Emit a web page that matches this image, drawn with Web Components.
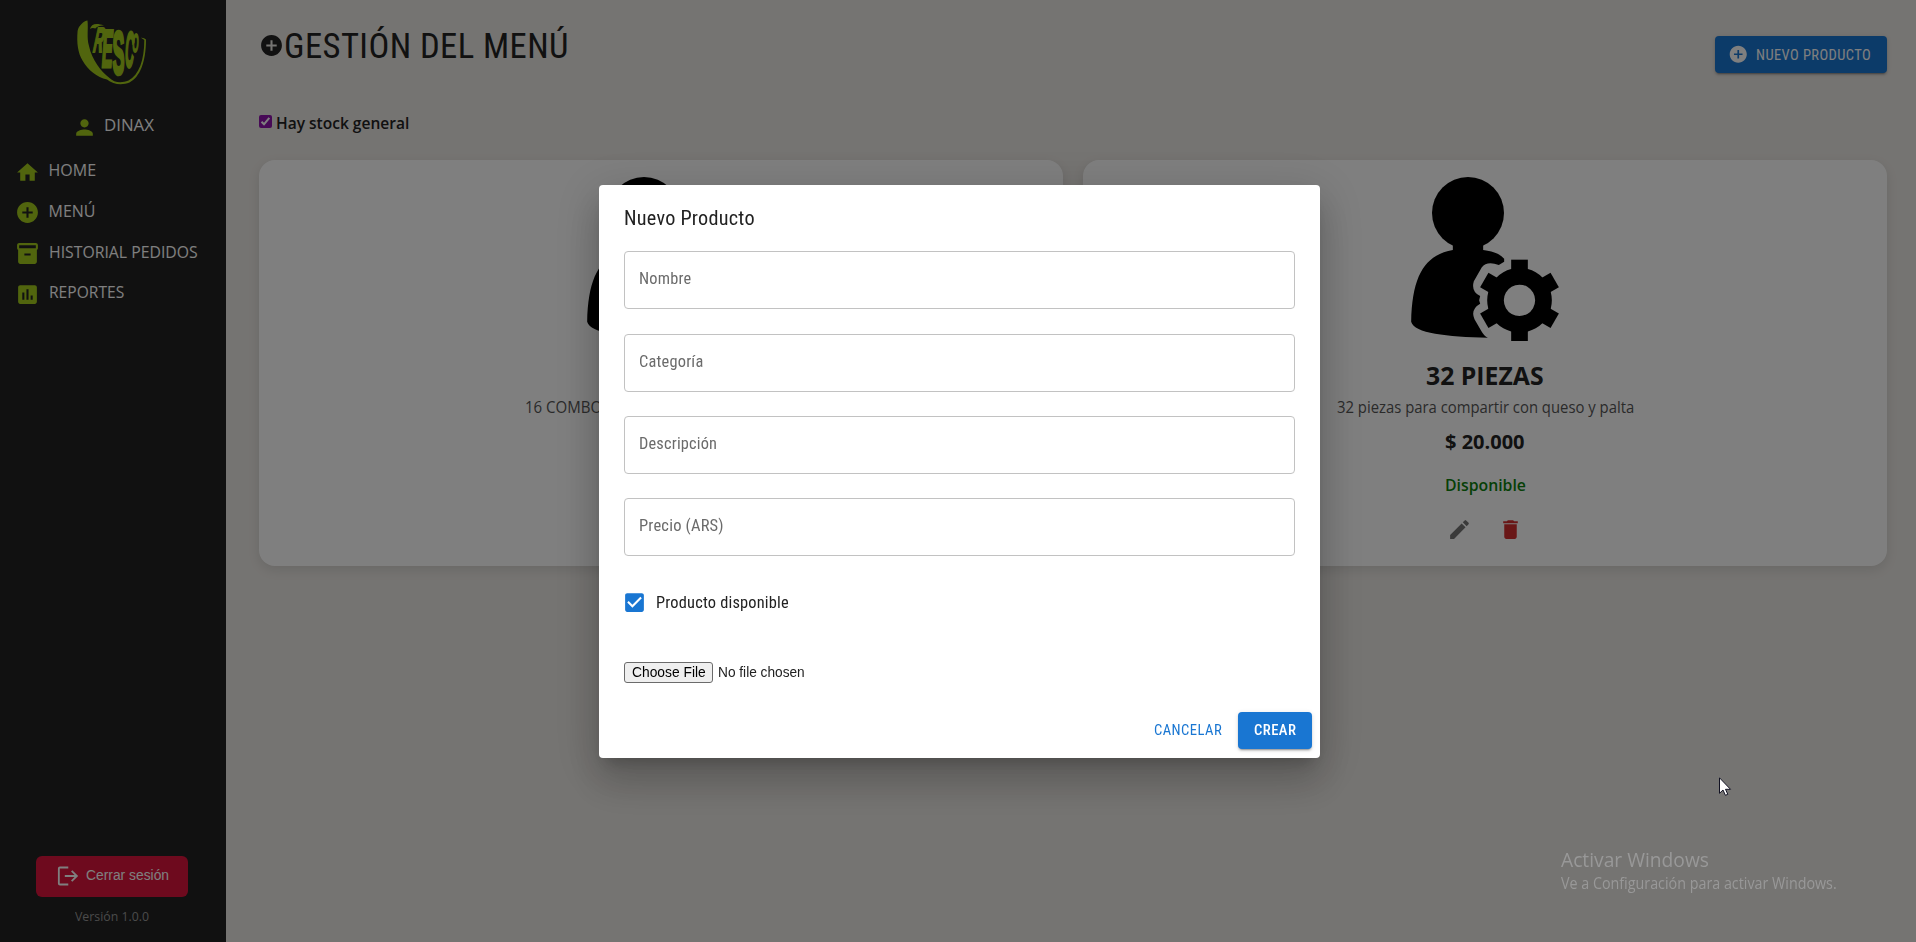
<!DOCTYPE html>
<html lang="es">
<head>
<meta charset="utf-8">
<title>Gestión del menú</title>
<style>
html,body{margin:0;height:100%;overflow:hidden}
body{font-family:"Open Sans","Noto Sans",sans-serif;background:#ebe8e4}
</style>
</head>
<body>
<menu-app></menu-app>
<script>
const ICONS = {
  person:'<path d="M12 12c2.21 0 4-1.79 4-4s-1.79-4-4-4-4 1.79-4 4 1.79 4 4 4m0 2c-2.67 0-8 1.34-8 4v2h16v-2c0-2.66-5.33-4-8-4"/>',
  home:'<path d="M10 20v-6h4v6h5v-8h3L12 3 2 12h3v8z"/>',
  add:'<path d="M12 2C6.48 2 2 6.48 2 12s4.48 10 10 10 10-4.480 10-10S17.520 2 12 2m5 11h-4v4h-2v-4H7v-2h4V7h2v4h4z"/>',
  archive:'<path fill-rule="evenodd" d="M20 2H4c-1 0-2 .9-2 2v3.010c0 .720.430 1.340 1 1.690V20c0 1.100 1.100 2 2 2h14c.9 0 2-.9 2-2V8.700c.570-.350 1-.970 1-1.690V4c0-1.100-1-2-2-2m-5 12H9v-2h6zm5-7H4V4h16z"/>',
  report:'<path d="M19 3H5c-1.100 0-2 .9-2 2v14c0 1.100.9 2 2 2h14c1.100 0 2-.9 2-2V5c0-1.100-.9-2-2-2M9 17H7v-7h2zm4 0h-2V7h2zm4 0h-2v-4h2z"/>',
  edit:'<path d="M3 17.250V21h3.750L17.810 9.940l-3.750-3.750zM20.710 7.040c.390-.390.390-1.020 0-1.410l-2.340-2.340a.9959.9959 0 0 0-1.410 0l-1.830 1.830 3.750 3.750z"/>',
  trash:'<path d="M6 19c0 1.100.9 2 2 2h8c1.100 0 2-.9 2-2V7H6zM19 4h-3.500l-1-1h-5l-1 1H5v2h14z"/>',
  check:'<path d="M19 3H5c-1.110 0-2 .9-2 2v14c0 1.100.890 2 2 2h14c1.110 0 2-.9 2-2V5c0-1.100-.890-2-2-2m-9 14-5-5 1.410-1.410L10 14.170l7.590-7.590L19 8z"/>',
  logout:'<path fill="none" stroke="currentColor" stroke-width="2" d="M12.300 2.700H3.200Q2 2.700 2 3.900v16.200q0 1.200 1.200 1.200h9.100M8.500 12H21.500M16 6.300 21.700 12 16 17.700"/>'
};

function define(name, css, html, after) {
  customElements.define(name, class extends HTMLElement {
    connectedCallback() {
      if (this.shadowRoot) return;
      const root = this.attachShadow({mode:'open'});
      root.innerHTML = '<style>' + css + '</style>' + (typeof html === 'function' ? html(this) : html);
      if (after) after(this, root);
    }
  });
}
const attr = (el, n, d='') => el.getAttribute(n) ?? d;

/* A single line of text condensed to the width given in "w". */
define('ui-text', `
  :host{display:inline-block;white-space:nowrap;flex:none}
  :host([face=cond]){font-family:Roboto,sans-serif;font-stretch:75%;letter-spacing:var(--track,.012em)}
  :host([face=arial]){font-family:"Liberation Sans",sans-serif}
  span{display:inline-block;transform-origin:0 50%}`,
  '<span><slot></slot></span>',
  (el, root) => {
    const span = root.querySelector('span'), w = +attr(el,'w',0);
    el.style.fontSize = attr(el,'size',16) + 'px';
    el.style.fontWeight = attr(el,'weight',400);
    el.style.lineHeight = attr(el,'lh',20) + 'px';
    el.style.height = attr(el,'lh',20) + 'px';
    if (w) {
      span.style.transform = 'scaleX(' + w / span.offsetWidth + ')';
      el.style.width = w + 'px';
    }
  });

define('ui-icon', `:host{display:block;flex:none;width:25px;height:25px}svg{display:block;width:100%;height:100%;fill:currentColor}`,
  el => '<svg viewBox="0 0 24 24">' + ICONS[attr(el,'name')] + '</svg>');

define('brand-logo', `:host{display:block;width:70px;height:65px;color:#a3cb1c}svg{display:block;overflow:visible;fill:currentColor}text{font:bold 10px "Liberation Sans",sans-serif;stroke:currentColor;stroke-width:.6}`,
  `<svg width="70" height="65" viewBox="77 20 70 65">
    <path d="M87.500 20.500C84 21 78.500 25.500 77.600 31C76.500 43 78 53 82.500 60.500C88 70 97 77.500 107 79.500C113 84.500 122 85.500 129.500 82.500C140 77 146 62 146 39.500Q144 37.500 141 37.800L144.300 40C144.300 60 139 75 128.500 80.500C121 83.500 114 82.500 109.500 78C101 71.500 92 60 89 46C86.500 37 88.500 29 87.500 20.500Z"/>
    <path d="M90 29C91 24 96 22.500 104 25.500C99 25.500 96 27 95.500 28.500Q92 27.500 90 29Z"/>
    <text transform="translate(92 52) skewX(-12) scale(1.350 3.500)">R</text>
    <text transform="translate(101 67) skewX(-4) scale(1.600 5.300)">E</text>
    <text transform="translate(112.500 73.500) scale(1.800 6.200)">S</text>
    <text transform="translate(124.500 67) skewX(-3) scale(1.200 5)">C</text>
    <text transform="translate(132 52) skewX(-3) scale(.800 2.600)">O</text>
  </svg>`);

define('nav-link', `
  :host{display:flex;align-items:center;height:40.670px;padding-left:15px;color:#fff}
  ui-icon{color:#a3cb1c;margin:4px 8.500px 0 0}`,
  el => `<ui-icon name="${attr(el,'icon')}"></ui-icon><ui-text w="${attr(el,'w')}"><slot></slot></ui-text>`);

define('side-bar', `
  :host{display:flex;flex-direction:column;width:226px;height:100%;background:#222;color:#fff;box-sizing:border-box;padding:20px 0 16px;flex:none}
  brand-logo{margin-left:77px;flex:none}
  .user{display:flex;align-items:center;height:40px;margin:20px 0 5px 72px}
  .user ui-icon{color:#a3cb1c;margin:4px 7px 0 0}
  .foot{margin-top:auto;display:flex;flex-direction:column;align-items:center;gap:9px;padding-right:2px}
  .out{display:flex;align-items:center;width:152px;height:41px;border-radius:6px;background:#dc143c;box-sizing:border-box;padding-left:20px}
  .out ui-icon{width:24px;height:22px;margin-right:6px;margin-top:-1px}
  .out ui-text{margin-top:-3px}
  .ver{color:#969696}`,
  `<brand-logo></brand-logo>
   <div class="user"><ui-icon name="person"></ui-icon><ui-text w="49.500">DINAX</ui-text></div>
   <nav>
     <nav-link icon="home" w="48">HOME</nav-link>
     <nav-link icon="add" w="47">MENÚ</nav-link>
     <nav-link icon="archive" w="149">HISTORIAL PEDIDOS</nav-link>
     <nav-link icon="report" w="75">REPORTES</nav-link>
   </nav>
   <div class="foot"><div class="out"><ui-icon name="logout"></ui-icon><ui-text face="arial" size="14" w="83">Cerrar sesión</ui-text></div>
   <ui-text class="ver" size="13" w="74">Versión 1.0.0</ui-text></div>`);

define('ui-button', `
  :host{display:flex;align-items:center;justify-content:center;height:37px;border-radius:4px;box-sizing:border-box;color:#1976d2;--track:.0286em}
  :host([solid]){background:#1976d2;color:#fff;box-shadow:0 3px 1px -2px rgba(0,0,0,.2),0 2px 2px 0 rgba(0,0,0,.14),0 1px 5px 0 rgba(0,0,0,.12)}
  ui-icon{width:20.500px;height:20.500px;margin-right:8px}`,
  el => (attr(el,'icon') ? `<ui-icon name="${attr(el,'icon')}"></ui-icon>` : '') +
    `<ui-text face="cond" size="14" weight="${el.hasAttribute('solid') ? (attr(el,'icon') ? 450 : 500) : 400}" w="${attr(el,'w')}"><slot></slot></ui-text>`);

define('profile-picture', `:host{display:block;width:148px;height:164px}svg{display:block}`,
  `<svg width="148" height="164" viewBox="333 81 443 492">
    <circle cx="503.500" cy="189" r="108"/><path d="M458 270H549V310H458Z"/>
    <path d="M458 300C375 315 336 375 333 515C342 550 440 560 563 563Q552 558 543 542L523 508Q510 478 540 461L537 451L540 438Q512 425 521 394L545 352Q560 332 596 345L612 335V326C597 311 580 304 549 300Z"/>
    <path fill-rule="evenodd" d="M658 354a97 97 0 1 0 .1 0ZM658 404a47 47 0 1 1-.1 0Z"/>
    <g><path d="M633 329H683V362H633Z"/><path d="M633 329H683V362H633Z" transform="rotate(60 658 451)"/><path d="M633 329H683V362H633Z" transform="rotate(120 658 451)"/><path d="M633 329H683V362H633Z" transform="rotate(180 658 451)"/><path d="M633 329H683V362H633Z" transform="rotate(240 658 451)"/><path d="M633 329H683V362H633Z" transform="rotate(300 658 451)"/></g>
  </svg>`);

define('product-card', `
  :host{display:flex;flex-direction:column;align-items:center;height:406px;box-sizing:border-box;padding-top:17px;background:#fff;border-radius:16px;color:#222;box-shadow:0 4px 12px rgba(0,0,0,.1)}
  ::slotted(.name){margin-top:20px}::slotted(.desc){margin-top:6px;color:#555}::slotted(.price){margin-top:12px}::slotted(.state){margin-top:22px;color:#0c800c}
  .tools{display:flex;gap:26px;margin-top:22px}`,
  el => '<profile-picture></profile-picture><slot></slot>' + (el.hasAttribute('tools') ? '<div class="tools"><ui-icon name="edit" style="color:#757575"></ui-icon><ui-icon name="trash" style="color:#d32f2f"></ui-icon></div>' : ''));

define('menu-page', `
  :host{display:block;flex:1;padding:25px 29px 0 33px;color:#222}
  header{display:flex;justify-content:space-between;height:88px}
  .title{display:flex;align-items:center;height:41px}
  .title ui-text{margin-top:2px}
  header ui-button{width:172px;margin-top:11px;padding-right:3px}
  .stock{display:flex;align-items:center;height:20px;margin-bottom:27px;gap:4px}
  .box{width:13px;height:13px;border-radius:2px;background:#8f14ad;margin-top:-3px}
  .box svg{display:block}
  .grid{display:grid;grid-template-columns:1fr 1fr;gap:20px}`,
  `<header><div class="title"><ui-icon name="add"></ui-icon><ui-text face="cond" size="35" lh="41" w="285">GESTIÓN DEL MENÚ</ui-text></div>
   <ui-button solid icon="add" w="115">NUEVO PRODUCTO</ui-button></header>
   <div class="stock"><div class="box"><svg width="13" height="13" viewBox="0 0 13 13"><path d="M2.500 6.800 5 9.300 10.300 2.800" fill="none" stroke="#fff" stroke-width="2"/></svg></div><ui-text weight="600" w="133">Hay stock general</ui-text></div>
   <div class="grid">
     <product-card><div class="desc" style="width:272px;margin-top:55px"><ui-text w="77">16 COMBO</ui-text></div></product-card>
     <product-card tools>
       <ui-text class="name" size="25" weight="700" lh="28" w="118">32 PIEZAS</ui-text>
       <ui-text class="desc" size="15.500" lh="24" w="297">32 piezas para compartir con queso y palta</ui-text>
       <ui-text class="price" size="20" weight="700" lh="22" w="80">$ 20.000</ui-text>
       <ui-text class="state" weight="600" lh="20" w="81">Disponible</ui-text>
     </product-card>
   </div>`);

define('text-field', `
  :host{display:flex;align-items:center;height:58px;box-sizing:border-box;border:1px solid #c2c2c2;border-radius:4px;padding:0 0 2px 13.500px;color:#6b6b6b}`,
  el => `<ui-text face="cond" w="${attr(el,'w')}"><slot></slot></ui-text>`);

define('file-input', `
  :host{display:flex;align-items:center;gap:5px;color:#222}
  .b{display:flex;align-items:center;justify-content:center;width:89px;height:21px;box-sizing:border-box;border:1px solid #6b6b6b;border-radius:3px;background:#efefef;color:#000}`,
  `<div class="b"><ui-text face="arial" size="14" w="74">Choose File</ui-text></div><ui-text face="arial" size="14" w="87">No file chosen</ui-text>`);

define('product-dialog', `
  :host{display:block;width:721px;height:573px;box-sizing:border-box;padding:20px 25px 0;background:#fff;border-radius:4px;color:#222;box-shadow:0 11px 15px -7px rgba(0,0,0,.2),0 24px 38px 3px rgba(0,0,0,.14),0 9px 46px 8px rgba(0,0,0,.12)}
  .fields{display:grid;gap:24.300px;margin-top:20.400px}
  .check{display:flex;align-items:center;height:26px;margin:33.500px 0 0 -2px;gap:9px}
  .check ui-icon{color:#1976d2}
  file-input{margin-top:46px}
  footer{display:flex;justify-content:flex-end;gap:8px;margin:29px -17px 0 0}
  footer ui-button:first-child{width:84px}footer ui-button:last-child{width:74px}`,
  `<ui-text face="cond" size="21" lh="26" w="131">Nuevo Producto</ui-text>
   <div class="fields"><text-field w="52">Nombre</text-field><text-field w="64.500">Categoría</text-field><text-field w="78.500">Descripción</text-field><text-field w="84.500">Precio (ARS)</text-field></div>
   <div class="check"><ui-icon name="check"></ui-icon><ui-text face="cond" w="133">Producto disponible</ui-text></div>
   <file-input></file-input>
   <footer><ui-button w="68">CANCELAR</ui-button><ui-button solid w="42">CREAR</ui-button></footer>`);

define('windows-notice', `
  :host{position:fixed;left:1561px;top:846px;display:flex;flex-direction:column;color:#989898}`,
  `<ui-text size="20" lh="28" w="148">Activar Windows</ui-text><ui-text size="15.500" lh="18" w="276">Ve a Configuración para activar Windows.</ui-text>`);

define('mouse-pointer', `:host{position:fixed;left:1719px;top:777px}svg{display:block}`,
  `<svg width="13" height="20" viewBox="0 0 13 20"><path d="M.5.800V16.300L4 13L6.400 18.300L8.800 17.300L6.500 12.300H11.500Z" fill="#fff" stroke="#111122"/></svg>`);

define('menu-app', `
  :host{display:flex;height:100vh;background:#ebe8e4}
  .backdrop{position:fixed;inset:0;display:flex;align-items:center;justify-content:center;background:rgba(0,0,0,.5);padding:1px 0 0 3px}`,
  `<side-bar></side-bar><menu-page></menu-page>
   <div class="backdrop"><product-dialog></product-dialog></div>
   <windows-notice></windows-notice><mouse-pointer></mouse-pointer>`);
</script>
</body>
</html>
